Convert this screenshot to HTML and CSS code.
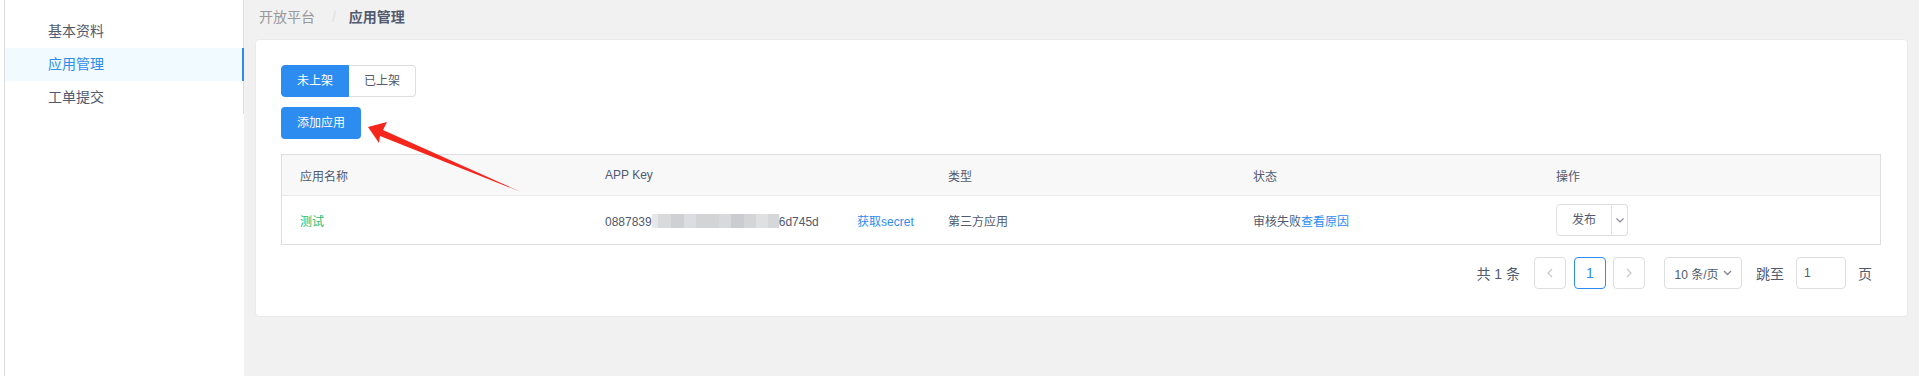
FILE: index.html
```html
<!DOCTYPE html>
<html lang="zh-CN">
<head>
    <meta charset="UTF-8">
    <meta name="viewport" content="width=device-width, initial-scale=1.0">
    <title>应用管理</title>
    <link rel="stylesheet" href="styles.css">
</head>
<body>
    <div class="layout">
        <div class="sidebar">
            <ul class="menu">
                <li class="menu-item">基本资料</li>
                <li class="menu-item active">应用管理</li>
                <li class="menu-item">工单提交</li>
            </ul>
        </div>

        <div class="main">
            <div class="breadcrumb">
                <span class="crumb">开放平台</span>
                <span class="sep">/</span>
                <span class="crumb current">应用管理</span>
            </div>

            <div class="card">
                <div class="radio-group">
                    <div class="radio active">未上架</div>
                    <div class="radio">已上架</div>
                </div>
                <div class="btn-primary">添加应用</div>

                <div class="table">
                    <div class="tr thead">
                        <div class="td">应用名称</div>
                        <div class="td">APP Key</div>
                        <div class="td">类型</div>
                        <div class="td">状态</div>
                        <div class="td">操作</div>
                    </div>
                    <div class="tr tbody">
                        <div class="td name">测试</div>
                        <div class="td">
                            <span>0887839</span><span class="blur"></span><span>6d745d</span>
                            <span class="link secret">获取secret</span>
                        </div>
                        <div class="td">第三方应用</div>
                        <div class="td">审核失败<span class="link">查看原因</span></div>
                        <div class="td">
                            <div class="split-btn">
                                <div class="split-main">发布</div>
                                <div class="split-arrow">
                                    <svg width="8" height="5" viewBox="0 0 8 5"><polyline points="0.5,0.5 4,4 7.5,0.5" fill="none" stroke="#808695" stroke-width="1.1"/></svg>
                                </div>
                            </div>
                        </div>
                    </div>
                </div>

                <div class="pager">
                    <span class="total">共 1 条</span>
                    <div class="page-btn prev">
                        <svg width="6" height="10" viewBox="0 0 6 10"><polyline points="5,1 1,5 5,9" fill="none" stroke="#c5c8ce" stroke-width="1.2"/></svg>
                    </div>
                    <div class="page-btn current">1</div>
                    <div class="page-btn next">
                        <svg width="6" height="10" viewBox="0 0 6 10"><polyline points="1,1 5,5 1,9" fill="none" stroke="#c5c8ce" stroke-width="1.2"/></svg>
                    </div>
                    <div class="page-size">
                        10 条/页
                        <svg width="9" height="6" viewBox="0 0 9 6"><polyline points="1,1 4.5,4.5 8,1" fill="none" stroke="#808695" stroke-width="1.3"/></svg>
                    </div>
                    <span class="jump">跳至</span>
                    <div class="jump-input">1</div>
                    <span class="jump-end">页</span>
                </div>

                <!-- red annotation arrow -->
                <svg class="arrow" width="165" height="78" viewBox="361 118 165 78">
                    <polygon points="368,127 387,122 383,130 521,192 380,136 379,143" fill="#f5261b"/>
                </svg>
            </div>
        </div>
    </div>
</body>
</html>
```

FILE: styles.css
```css
body {
    margin: 0;
    background-color: #fff;
    font-family: "Liberation Sans", "Noto Sans CJK SC", sans-serif;
    color: #515a6e;
}

.layout {
    display: flex;
    min-height: 376px;
}

/* sidebar */
.sidebar {
    width: 239px;
    margin-left: 4px;
    border-left: 1px solid #dcdcdc;
    background-color: #fff;
}

.menu {
    list-style: none;
    margin: 0;
    padding: 15px 0 0;
    border-right: 1px solid #dcdee2;
}

.menu-item {
    position: relative;
    height: 33px;
    line-height: 33px;
    padding-left: 43px;
    font-size: 14px;
    color: #515a6e;
}

.menu-item.active {
    background-color: #f0faff;
    color: #2d8cf0;
}

.menu-item.active::after {
    content: "";
    position: absolute;
    top: 0;
    bottom: 0;
    right: -1px;
    width: 2px;
    background-color: #2d8cf0;
}

/* main */
.main {
    flex: 1;
    background-color: #f1f1f1;
    padding: 7px 11px 0;
}

.breadcrumb {
    height: 21px;
    line-height: 21px;
    font-size: 14px;
    padding-left: 4px;
}

.crumb {
    color: #999;
}

.crumb.current {
    color: #515a6e;
    font-weight: bold;
}

.sep {
    color: #dcdee2;
    margin: 0 9px 0 13px;
}

.card {
    position: relative;
    margin-top: 11px;
    background-color: #fff;
    border: 1px solid #e9eaec;
    border-radius: 4px;
    padding: 25px 26px 27px 25px;
}

.radio-group {
    display: flex;
    font-size: 12px;
}

.radio {
    box-sizing: border-box;
    width: 67px;
    height: 32px;
    line-height: 30px;
    text-align: center;
    border: 1px solid #dcdee2;
    border-left: none;
    border-radius: 0 4px 4px 0;
}

.radio.active {
    width: 68px;
    border: 1px solid #2d8cf0;
    border-radius: 4px 0 0 4px;
    background-color: #2d8cf0;
    color: #fff;
}

.btn-primary {
    width: 80px;
    height: 32px;
    line-height: 32px;
    margin-top: 10px;
    text-align: center;
    font-size: 12px;
    color: #fff;
    background-color: #2d8cf0;
    border-radius: 4px;
}

/* table */
.table {
    margin-top: 15px;
    border: 1px solid #dcdee2;
    font-size: 12px;
}

.tr {
    display: grid;
    grid-template-columns: 305px 343px 305px 303px 1fr;
    align-items: center;
}

.thead {
    height: 40px;
    background-color: #f8f8f9;
    border-bottom: 1px solid #e8eaec;
}

.tbody {
    height: 48px;
}

.td {
    padding-left: 18px;
    white-space: nowrap;
}

.name {
    color: #19be6b;
}

.link {
    color: #2d8cf0;
}

.secret {
    margin-left: 35px;
}

.blur {
    display: inline-block;
    width: 127px;
    height: 14px;
    vertical-align: -2px;
    background: linear-gradient(to right,
        #e6e7e9 0, #e6e7e9 6px,
        #d9dadc 6px, #d9dadc 19px,
        #cfd0d2 19px, #cfd0d2 32px,
        #dcdde0 32px, #dcdde0 44px,
        #d3d4d6 44px, #d3d4d6 67px,
        #d8d9db 67px, #d8d9db 79px,
        #cbcccf 79px, #cbcccf 92px,
        #d4d5d7 92px, #d4d5d7 104px,
        #dfe0e2 104px, #dfe0e2 116px,
        #d6d7d9 116px, #d6d7d9 127px);
}

.split-btn {
    display: flex;
    height: 32px;
}

.split-main {
    width: 54px;
    line-height: 30px;
    text-align: center;
    border: 1px solid #dcdee2;
    border-radius: 4px 0 0 4px;
}

.split-arrow {
    width: 15px;
    display: flex;
    align-items: center;
    justify-content: center;
    border: 1px solid #dcdee2;
    border-left: none;
    border-radius: 0 4px 4px 0;
}

/* pagination */
.pager {
    display: flex;
    justify-content: flex-end;
    align-items: center;
    margin-top: 12px;
    padding-right: 9px;
    font-size: 14px;
}

.total {
    margin-right: 14px;
}

.page-btn {
    width: 30px;
    height: 30px;
    line-height: 30px;
    border: 1px solid #dcdee2;
    border-radius: 4px;
    display: flex;
    align-items: center;
    justify-content: center;
    font-size: 14px;
}

.page-btn.current {
    border-color: #2d8cf0;
    color: #2d8cf0;
    margin: 0 7px 0 8px;
}

.page-btn.next {
    margin-right: 19px;
}

.page-size {
    width: 76px;
    height: 30px;
    border: 1px solid #dcdee2;
    border-radius: 4px;
    display: flex;
    align-items: center;
    justify-content: center;
    gap: 4px;
    font-size: 12px;
}

.jump {
    margin: 0 12px 0 14px;
}

.jump-input {
    width: 41px;
    height: 30px;
    line-height: 30px;
    padding-left: 7px;
    border: 1px solid #dcdee2;
    border-radius: 4px;
    font-size: 12px;
}

.jump-end {
    margin-left: 12px;
}

.arrow {
    position: absolute;
    left: 105px;
    top: 78px;
}
```
